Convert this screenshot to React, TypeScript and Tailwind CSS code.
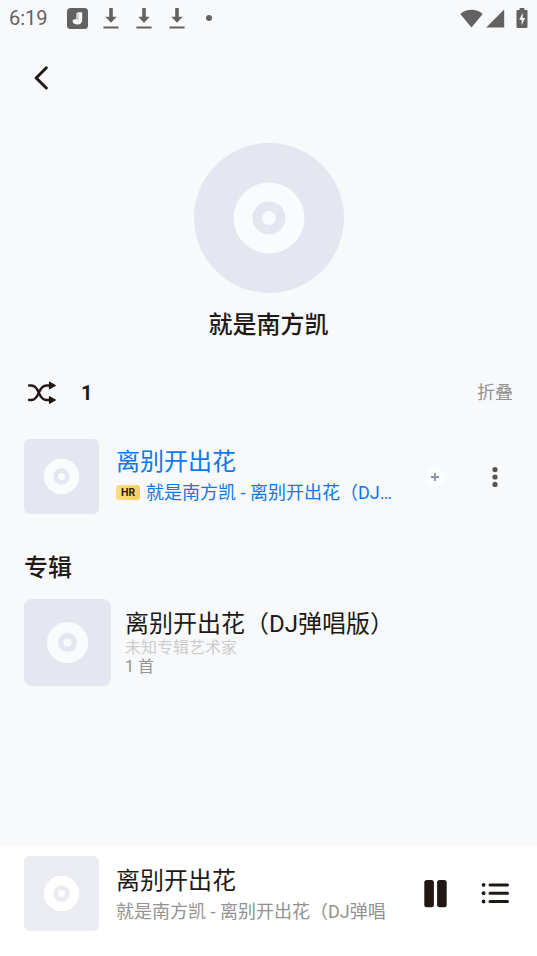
const DISC_TONES = {
  page: { base: "#e4e7ef", ring: "#fafbfd" },
  player: { base: "#ebecf2", ring: "#ffffff" },
};

type DiscProps = { tone?: keyof typeof DISC_TONES; className: string };

function Disc({ tone = "page", className }: DiscProps) {
  const { base, ring } = DISC_TONES[tone];
  return (
    <svg viewBox="0 0 150 150" className={className} style={{ backgroundColor: base }} aria-hidden="true">
      <circle cx="75" cy="75" r="35.5" fill={ring} />
      <circle cx="75" cy="75" r="16.5" fill={base} />
      <circle cx="75" cy="75" r="7" fill={ring} />
    </svg>
  );
}

function DownloadIcon() {
  return (
    <svg viewBox="0 0 16 21" className="h-[21px] w-4" fill="#626262" aria-hidden="true">
      <path d="M6.2 0h3.6v8.8h3.9L8 14.8 2.3 8.8h3.9zM0.4 18.4h15.2v2H0.4z" />
    </svg>
  );
}

function StatusBar() {
  return (
    <div className="flex h-9 items-center justify-between px-[9px] text-[#626262]">
      <div className="flex items-center">
        <span className="text-xl leading-6">6:19</span>
        <svg viewBox="0 0 21 21" className="ml-[19px] size-[21px]" aria-hidden="true">
          <rect width="21" height="21" rx="3.5" fill="#626262" />
          <path d="M11.300 4.200h3.900v7.600c0 2.900-1.800 4.700-4.700 4.700-3 0-4.900-1.400-4.900-3.400 0-1.200.9-1.900 2.200-1.900h1.600V5.500z" fill="#f8f9fb" />
          <path d="M10.900 6v6.500" stroke="#626262" strokeWidth="0.500" />
        </svg>
        <div className="ml-[15px] flex items-center gap-[17px]">
          <DownloadIcon />
          <DownloadIcon />
          <DownloadIcon />
        </div>
        <span className="ml-[21px] size-1.5 rounded-full bg-[#626262]" />
      </div>
      <div className="flex items-center">
        <svg viewBox="0 0 23 19" className="h-[19px] w-[23px]" fill="#626262" aria-hidden="true">
          <path d="M0.300 4.900C6.500-.5 16.500-.5 22.700 4.900L11.500 18.500z" />
        </svg>
        <svg viewBox="0 0 19 19" className="ml-[3px] h-[19px] w-[19px]" fill="#626262" aria-hidden="true">
          <path d="M18.200 0.500v18H0.200z" />
        </svg>
        <svg viewBox="0 0 12 20" className="ml-[11px] h-5 w-3" aria-hidden="true">
          <path d="M3.600 0h4.800v2h1.900c.7 0 1.200.5 1.200 1.200v15.600c0 .7-.5 1.200-1.200 1.200H1.700C1 20 .5 19.500.5 18.800V3.200C.5 2.500 1 2 1.700 2h1.900z" fill="#626262" />
          <path d="M6.700 4.800 3.200 11.700h2.400v5.200l3.600-7H6.700z" fill="#f8f9fb" />
        </svg>
      </div>
    </div>
  );
}

function ShuffleIcon() {
  return (
    <svg viewBox="0 0 30 24" className="h-6 w-[30px]" fill="none" stroke="#211815" strokeWidth="2.300" strokeLinecap="round" aria-hidden="true">
      <path d="M2 4.500h2.500c3.500 0 5.200 2.200 7.300 7.200s4 7.300 7.700 7.300H24" />
      <path d="M2 19h2.500c3.500 0 5.200-2.300 7.300-7.300s4-7.200 7.700-7.200H24" />
      <path d="M22.500 1.200v6.600l5.800-3.300zM22.500 15.700v6.600l5.800-3.300z" fill="#211815" strokeWidth="1.200" strokeLinejoin="round" />
    </svg>
  );
}

function TrackRow() {
  return (
    <li className="flex items-center pl-6 pr-3">
      <Disc className="size-[75px] shrink-0 rounded-md" />
      <div className="ml-[17px] min-w-0 flex-1 pr-3 text-[#0a78ee]">
        <p className="truncate text-2xl leading-8">离别开出花</p>
        <div className="flex items-center gap-1.5">
          <span className="flex h-[15px] w-6 shrink-0 items-center justify-center rounded-[3px] bg-linear-to-r from-[#ffdc86] to-[#f6ce5c] font-[Inter,sans-serif] text-[10px] font-bold text-[#211815]">
            HR
          </span>
          <p className="truncate text-lg leading-[30px]">就是南方凯 - 离别开出花（DJ弹唱版）</p>
        </div>
      </div>
      <button type="button" aria-label="添加" className="flex h-12 w-[60px] items-center justify-center">
        <span className="flex size-5 items-center justify-center rounded-full bg-[#fcfdfe]">
          <svg viewBox="0 0 8 8" className="size-2" stroke="#8793a3" strokeWidth="1.800" aria-hidden="true">
            <path d="M4 0v8M0 4h8" />
          </svg>
        </span>
      </button>
      <button type="button" aria-label="更多" className="flex h-12 w-[60px] items-center justify-center">
        <svg viewBox="0 0 6 20" className="h-5 w-1.5" fill="#555" aria-hidden="true">
          <circle cx="3" cy="2.600" r="2.600" />
          <circle cx="3" cy="10" r="2.600" />
          <circle cx="3" cy="17.400" r="2.600" />
        </svg>
      </button>
    </li>
  );
}

function Player() {
  return (
    <footer className="flex items-center bg-white pb-[25px] pl-6 pr-3 pt-2.5">
      <Disc tone="player" className="size-[75px] shrink-0 rounded-md" />
      <div className="ml-[17px] min-w-0 flex-1 pr-3 pt-1">
        <p className="truncate text-2xl leading-8 text-[#211815]">离别开出花</p>
        <p className="overflow-hidden whitespace-nowrap text-lg leading-[30px] text-[#929292]">就是南方凯 - 离别开出花（DJ弹唱</p>
      </div>
      <button type="button" aria-label="暂停" className="flex h-12 w-[60px] items-center justify-center">
        <svg viewBox="0 0 23 28" className="h-7 w-[23px]" fill="#211815" aria-hidden="true">
          <rect x="0.300" y="0" width="9.600" height="27.200" rx="2.500" />
          <rect x="13.100" y="0" width="9.600" height="27.200" rx="2.500" />
        </svg>
      </button>
      <button type="button" aria-label="播放列表" className="flex h-12 w-[60px] items-center justify-center">
        <svg viewBox="0 0 28 22" className="h-[22px] w-7" fill="#211815" aria-hidden="true">
          <circle cx="2.600" cy="1.900" r="1.900" />
          <circle cx="2.600" cy="10.200" r="1.900" />
          <circle cx="2.600" cy="18.500" r="1.900" />
          <path d="M9 1.900h17.500M9 10.200h17.500M9 18.500h17.500" stroke="#211815" strokeWidth="3" strokeLinecap="round" />
        </svg>
      </button>
    </footer>
  );
}

export default function App() {
  return (
    <div className="flex min-h-screen flex-col bg-[#f8f9fb] font-[Roboto,'Noto_Sans_CJK_SC',sans-serif] text-[#211815]">
      <StatusBar />
      <header className="flex h-[83px] items-center px-[17px]">
        <button type="button" aria-label="返回" className="flex size-12 items-center justify-center">
          <svg viewBox="0 0 14 24" className="h-6 w-3.5" fill="none" stroke="#211815" strokeWidth="3" strokeLinecap="round" strokeLinejoin="round" aria-hidden="true">
            <path d="M12.300 1.800 2.200 12l10.100 10" />
          </svg>
        </button>
      </header>

      <main className="flex-1">
        <section className="flex flex-col items-center pt-6">
          <Disc className="size-[150px] rounded-full" />
          <h1 className="mt-3.5 text-2xl font-medium leading-9">就是南方凯</h1>
        </section>

        <div className="mt-8 flex h-9 items-center pl-[27px] pr-6">
          <button type="button" aria-label="随机播放 1" className="flex items-center gap-6">
            <ShuffleIcon />
            <span className="text-xl font-bold leading-6">1</span>
          </button>
          <button type="button" className="ml-auto text-lg leading-6 text-[#929292]">
            折叠
          </button>
        </div>

        <ul className="mt-7">
          <TrackRow />
        </ul>

        <h2 className="mt-9 px-6 text-2xl font-medium leading-9">专辑</h2>
        <a href="#album" className="mt-[13px] flex items-center px-6">
          <Disc className="size-[87px] shrink-0 rounded-lg" />
          <div className="ml-[14px] min-w-0 flex-1">
            <p className="truncate text-2xl leading-7">离别开出花（DJ弹唱版）</p>
            <p className="text-base leading-5 text-[#cdcdcd]">未知专辑艺术家</p>
            <p className="text-base leading-[18px] text-[#929292]">1 首</p>
          </div>
        </a>
      </main>

      <Player />
    </div>
  );
}
